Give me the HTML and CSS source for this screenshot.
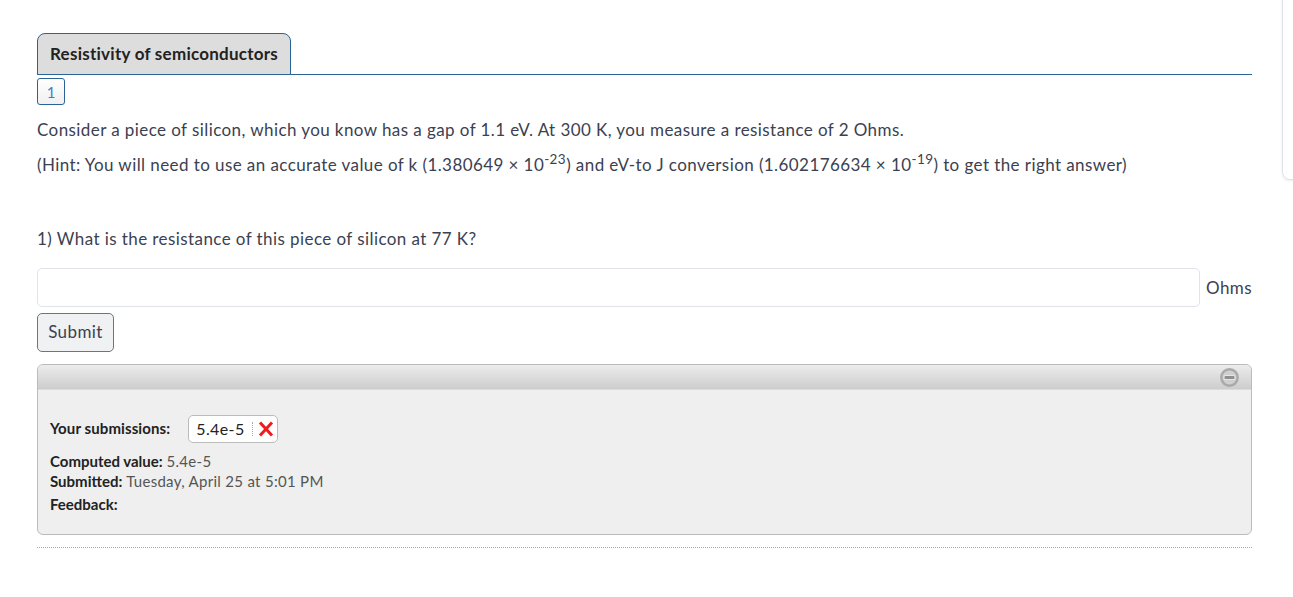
FILE: index.html
```html
<!DOCTYPE html>
<html>
<head>
    <meta charset="utf-8">
    <link rel="stylesheet" href="styles.css">
</head>
<body>
    <div class="side-card"></div>
    <div class="page">
      <div class="tabs"><div class="tab">Resistivity of semiconductors</div></div>
      <div class="pager"><button class="page-btn">1</button></div>
      <p class="line-one">Consider a piece of silicon, which you know has a gap of 1.1 eV. At 300 K, you measure a resistance of 2 Ohms.</p>
      <p class="line-two">(Hint: You will need to use an accurate value of k (1.380649 × 10<sup>-23</sup>) and eV-to J conversion (1.602176634 × 10<sup>-19</sup>) to get the right answer)</p>
      <p class="question">1) What is the resistance of this piece of silicon at 77 K?</p>
      <div class="answer-row">
        <input class="answer" type="text">
        <span class="unit">Ohms</span>
      </div>
      <button class="submit">Submit</button>
      <div class="panel">
        <div class="panel-head">
          <svg class="collapse" width="19" height="19" viewBox="0 0 19 19">
            <circle cx="9.5" cy="9.5" r="8.2" fill="#cfcfcf" stroke="#a9a9a9" stroke-width="2.4"/>
            <rect x="3.5" y="7" width="12" height="5" rx="2" fill="#e6e6e6"/>
            <rect x="4.5" y="8" width="10" height="3" rx="1" fill="#8f8f8f"/>
          </svg>
        </div>
        <div class="panel-body">
          <div class="subs">
            <b>Your submissions:</b>
            <div class="chip">
              <span class="chip-val">5.4e-5</span>
              <svg class="chip-x" width="16" height="16" viewBox="0 0 16 16">
                <path d="M2 1.5 L14 14.5 M14 1.5 L2 14.5" stroke="#ee1c1c" stroke-width="3" fill="none"/>
              </svg>
            </div>
          </div>
          <div class="info"><b>Computed value:</b> <span>5.4e-5</span></div>
          <div class="info"><b>Submitted:</b> <span>Tuesday, April 25 at 5:01 PM</span></div>
          <div class="info feedback"><b>Feedback:</b></div>
        </div>
      </div>
      <div class="dots"></div>
    </div>
</body>
</html>
```

FILE: styles.css
```css
* {
margin: 0;
padding: 0;
box-sizing: border-box;
font-family: "Lato", "Open Sans", sans-serif;
}

body {
color: #3b4151;
font-size: 17px;
letter-spacing: 0.42px;
overflow: hidden;
}

.side-card {
position: absolute;
top: -20px;
left: 1282px;
width: 60px;
height: 200px;
background: #fff;
border: 1px solid #dfe4ec;
border-radius: 8px;
box-shadow: 0 1px 3px rgba(0, 0, 0, 0.08);
}

.page {
padding: 33px 41px 0 37px;
}

.tabs {
height: 42px;
border-bottom: 1px solid #2a6496;
}

.tab {
display: inline-block;
width: 254px;
height: 42px;
padding-left: 12px;
line-height: 40px;
font-size: 17px;
font-weight: bold;
letter-spacing: 0.25px;
color: #222;
background: #ddd;
border: 1px solid #2a6496;
border-radius: 8px 8px 0 0;
}

.pager {
height: 27px;
margin-top: 3px;
}

.page-btn {
width: 28px;
height: 27px;
font-size: 15px;
color: #3a80c8;
background: linear-gradient(#fff, #f0f0f0);
border: 1px solid #2a6496;
border-radius: 3px;
}

.line-one {
margin-top: 15px;
line-height: 20px;
}

.line-two {
margin-top: 15px;
line-height: 20px;
}

sup {
font-size: 13.5px;
line-height: 0;
}

.question {
margin-top: 54px;
line-height: 20px;
}

.answer-row {
display: flex;
align-items: center;
justify-content: space-between;
margin-top: 19px;
}

.answer {
width: 1163px;
height: 39px;
border: 1px solid #e1e3ea;
border-radius: 5px;
background: #fff;
}

.submit {
display: block;
width: 77px;
height: 39px;
margin-top: 6px;
padding-bottom: 2px;
font-size: 17px;
letter-spacing: 0.42px;
color: #3b4151;
background: #f0f1f2;
border: 1px solid #6c757d;
border-radius: 5px;
}

.panel {
height: 171px;
margin-top: 12px;
background: #efefef;
border: 1px solid #bbb;
border-radius: 6px;
overflow: hidden;
}

.panel-head {
display: flex;
justify-content: flex-end;
align-items: center;
height: 25px;
padding-right: 12px;
background: linear-gradient(#ececec, #cdcdcd);
border-bottom: 1px solid #dcdcdc;
}

.panel-body {
padding: 25px 12px 0;
font-size: 15px;
letter-spacing: 0;
color: #222;
}

.subs {
display: flex;
align-items: center;
gap: 18px;
}

.subs b {
letter-spacing: 0.1px;
margin-top: -3px;
}

.chip {
display: flex;
align-items: center;
height: 28px;
padding: 0 3px 0 7px;
font-size: 16px;
letter-spacing: 0.4px;
background: #fff;
border: 1px solid #bbb;
border-radius: 5px;
}

.chip-val {
padding-right: 7px;
border-right: 1px dotted #aaa;
line-height: 14px;
color: #222;
}

.chip-x {
margin-left: 5px;
}

.info {
line-height: 20px;
}

.info span {
color: #555;
letter-spacing: 0.3px;
}

.info b {
color: #222;
}

.subs + .info {
margin-top: 8px;
}

.feedback {
margin-top: 3px;
}

.dots {
height: 1px;
margin-top: 12px;
border-top: 1px dotted #aaa;
}
```
